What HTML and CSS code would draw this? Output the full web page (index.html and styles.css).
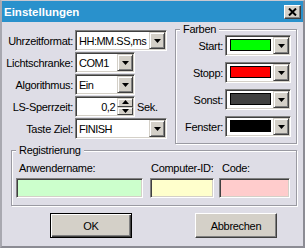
FILE: index.html
```html
<!DOCTYPE html>
<html lang="de">
<head>
    <meta charset="UTF-8">
    <title>Einstellungen</title>
    <link rel="stylesheet" href="styles.css">
</head>
<body>
<div class="window">
  <div class="titlebar">
    <span class="title">Einstellungen</span>
    <span class="close-btn">
      <svg width="9" height="8" viewBox="0 0 9 8"><path d="M1 0.5 L8 7.5 M8 0.5 L1 7.5" stroke="#000" stroke-width="2" fill="none"/></svg>
    </span>
  </div>

  <div class="content">
    <div class="top">
      <div class="form">
        <label class="lbl">Uhrzeitformat:</label>
        <div class="combo wide"><span class="val">HH:MM.SS,ms</span><span class="drop"><svg width="7" height="4" viewBox="0 0 7 4"><polygon points="0,0 7,0 3.5,4" fill="#000"/></svg></span></div>

        <label class="lbl">Lichtschranke:</label>
        <div class="combo small"><span class="val">COM1</span><span class="drop"><svg width="7" height="4" viewBox="0 0 7 4"><polygon points="0,0 7,0 3.5,4" fill="#000"/></svg></span></div>

        <label class="lbl">Algorithmus:</label>
        <div class="combo small"><span class="val">Ein</span><span class="drop"><svg width="7" height="4" viewBox="0 0 7 4"><polygon points="0,0 7,0 3.5,4" fill="#000"/></svg></span></div>

        <label class="lbl">LS-Sperrzeit:</label>
        <div class="spin-row">
          <div class="combo small spin">
            <span class="val num">0,2</span>
            <span class="updown">
              <span class="half"><svg width="7" height="4" viewBox="0 0 7 4"><polygon points="0,4 7,4 3.5,0" fill="#000"/></svg></span>
              <span class="half"><svg width="7" height="4" viewBox="0 0 7 4"><polygon points="0,0 7,0 3.5,4" fill="#000"/></svg></span>
            </span>
          </div>
          <span class="unit">Sek.</span>
        </div>

        <label class="lbl">Taste Ziel:</label>
        <div class="combo wide"><span class="val">FINISH</span><span class="drop"><svg width="7" height="4" viewBox="0 0 7 4"><polygon points="0,0 7,0 3.5,4" fill="#000"/></svg></span></div>
      </div>

      <fieldset class="group colors">
        <legend>Farben</legend>
        <div class="color-grid">
          <label class="lbl">Start:</label>
          <div class="combo color"><span class="swatch green"></span><span class="drop"><svg width="7" height="4" viewBox="0 0 7 4"><polygon points="0,0 7,0 3.5,4" fill="#000"/></svg></span></div>

          <label class="lbl">Stopp:</label>
          <div class="combo color"><span class="swatch red"></span><span class="drop"><svg width="7" height="4" viewBox="0 0 7 4"><polygon points="0,0 7,0 3.5,4" fill="#000"/></svg></span></div>

          <label class="lbl">Sonst:</label>
          <div class="combo color"><span class="swatch grey"></span><span class="drop"><svg width="7" height="4" viewBox="0 0 7 4"><polygon points="0,0 7,0 3.5,4" fill="#000"/></svg></span></div>

          <label class="lbl">Fenster:</label>
          <div class="combo color"><span class="swatch black"></span><span class="drop"><svg width="7" height="4" viewBox="0 0 7 4"><polygon points="0,0 7,0 3.5,4" fill="#000"/></svg></span></div>
        </div>
      </fieldset>
    </div>

    <fieldset class="group reg">
      <legend>Registrierung</legend>
      <div class="reg-row">
        <div class="reg-col name">
          <label class="reg-lbl">Anwendername:</label>
          <div class="edit green-bg"></div>
        </div>
        <div class="reg-col pcid">
          <label class="reg-lbl">Computer-ID:</label>
          <div class="edit yellow-bg"></div>
        </div>
        <div class="reg-col code">
          <label class="reg-lbl">Code:</label>
          <div class="edit pink-bg"></div>
        </div>
      </div>
    </fieldset>

    <div class="buttons">
      <button type="button" class="btn default">OK</button>
      <button type="button" class="btn">Abbrechen</button>
    </div>
  </div>
</div>
</body>
</html>
```

FILE: styles.css
```css
body{
  margin: 0;
}

.window{
  width: 305px;
  height: 248px;
  box-sizing: border-box;
  background-color: #dedde6;
  border: 2px solid #8c8c94;
  border-top: 1px solid #c8c8d0;
  border-left-color: #a8a8b0;
  font: 11px "Liberation Sans", Arial, sans-serif;
  letter-spacing: -0.3px;
  color: #000;
  display: flex;
  flex-direction: column;
}

.titlebar{
  height: 21px;
  background-color: #2991cc;
  display: flex;
  align-items: center;
  justify-content: space-between;
  padding: 0 2px;
}

.title{
  color: #fff;
  font-weight: bold;
  font-size: 11.5px;
  letter-spacing: 0;
}

.close-btn{
  width: 17px;
  height: 14px;
  box-sizing: border-box;
  background-color: #d4d0c8;
  border: 1px solid;
  border-color: #fff #404040 #404040 #fff;
  box-shadow: inset -1px -1px 0 #808080;
  display: flex;
  align-items: center;
  justify-content: center;
}

.top{
  display: flex;
  align-items: flex-start;
}

.form{
  display: grid;
  grid-template-columns: 71px auto;
  column-gap: 2px;
  row-gap: 1px;
  align-items: center;
  justify-items: start;
  margin-top: 8px;
}

.lbl{
  justify-self: end;
  white-space: nowrap;
}

/* sunken combo box */
.combo{
  height: 21px;
  box-sizing: border-box;
  background-color: #fff;
  border: 1px solid;
  border-color: #808080 #fff #fff #808080;
  box-shadow: inset 1px 1px 0 #404040, inset -1px -1px 0 #d4d0c8;
  padding: 1px;
  display: flex;
  align-items: center;
}

.combo.wide{ width: 92px; }
.combo.small{ width: 60px; }
.combo.color{ width: 66px; }

.val{
  flex: 1;
  padding-left: 2px;
  white-space: nowrap;
  overflow: hidden;
  letter-spacing: -0.5px;
}

.val.num{
  text-align: right;
  padding-right: 2px;
}

.drop{
  width: 16px;
  height: 17px;
  box-sizing: border-box;
  background-color: #d4d0c8;
  border: 1px solid;
  border-color: #d4d0c8 #404040 #404040 #d4d0c8;
  box-shadow: inset 1px 1px 0 #fff, inset -1px -1px 0 #808080;
  display: flex;
  align-items: center;
  justify-content: center;
  flex-shrink: 0;
}

.spin-row{
  display: flex;
  align-items: center;
}

.unit{
  margin-left: 2px;
}

.updown{
  width: 16px;
  height: 17px;
  display: flex;
  flex-direction: column;
  flex-shrink: 0;
}

.half{
  flex: 1;
  box-sizing: border-box;
  background-color: #d4d0c8;
  border: 1px solid;
  border-color: #d4d0c8 #404040 #404040 #d4d0c8;
  box-shadow: inset 1px 1px 0 #fff;
  display: flex;
  align-items: center;
  justify-content: center;
}

/* etched group boxes */
.group{
  margin: 0;
  border: 1px solid #9a9aa2;
  box-shadow: inset 1px 1px 0 #fff, 1px 1px 0 #fff;
  min-width: 0;
}

.group legend{
  line-height: 12px;
  padding: 0 3px;
  background-color: #dedde6;
}

.colors{
  width: 122px;
  box-sizing: border-box;
  margin: 1px 6px 0 auto;
  padding: 0 5px 6px 4px;
}

.color-grid{
  display: grid;
  grid-template-columns: auto 66px;
  column-gap: 2px;
  row-gap: 6px;
  align-items: center;
  justify-content: end;
}

.swatch{
  flex: 1;
  height: 12px;
  box-sizing: border-box;
  border: 1px solid #000;
  margin: 2px 2px 0 3px;
  align-self: flex-start;
}

.green{ background-color: #00ff00; }
.red{ background-color: #ff0000; }
.grey{ background-color: #404040; }
.black{ background-color: #000; }

.reg{
  margin: 0 6px 0 9px;
  padding: 0 4px 7px 4px;
}

.reg-row{
  display: flex;
  margin-top: 5px;
}

.reg-col{
  display: flex;
  flex-direction: column;
}

.reg-col.name{ width: 127px; }
.reg-col.pcid{ width: 64px; margin-left: 7px; }
.reg-col.code{ width: 71px; margin-left: 5px; }

.reg-lbl{
  line-height: 14px;
  padding-left: 3px;
  white-space: nowrap;
}

.pcid .reg-lbl{ padding-left: 1px; }

.edit{
  height: 20px;
  margin-top: 3px;
  box-sizing: border-box;
  border: 1px solid;
  border-color: #808080 #fff #fff #808080;
  box-shadow: inset 1px 1px 0 #404040, inset -1px -1px 0 #d4d0c8;
}

.green-bg{ background-color: #ccffcc; }
.yellow-bg{ background-color: #ffffcc; }
.pink-bg{ background-color: #ffcccc; }

.buttons{
  display: flex;
  gap: 63px;
  padding-left: 48px;
  margin-top: 7px;
}

.btn{
  width: 82px;
  height: 25px;
  box-sizing: border-box;
  background-color: #d4d0c8;
  border: 1px solid;
  border-color: #fff #404040 #404040 #fff;
  box-shadow: inset -1px -1px 0 #808080;
  font: 11px "Liberation Sans", Arial, sans-serif;
  letter-spacing: -0.3px;
  color: #000;
  padding: 0;
}

.btn.default{
  border: 1px solid #000;
  box-shadow: inset 1px 1px 0 #fff, inset -1px -1px 0 #404040, inset -2px -2px 0 #808080;
}
```
